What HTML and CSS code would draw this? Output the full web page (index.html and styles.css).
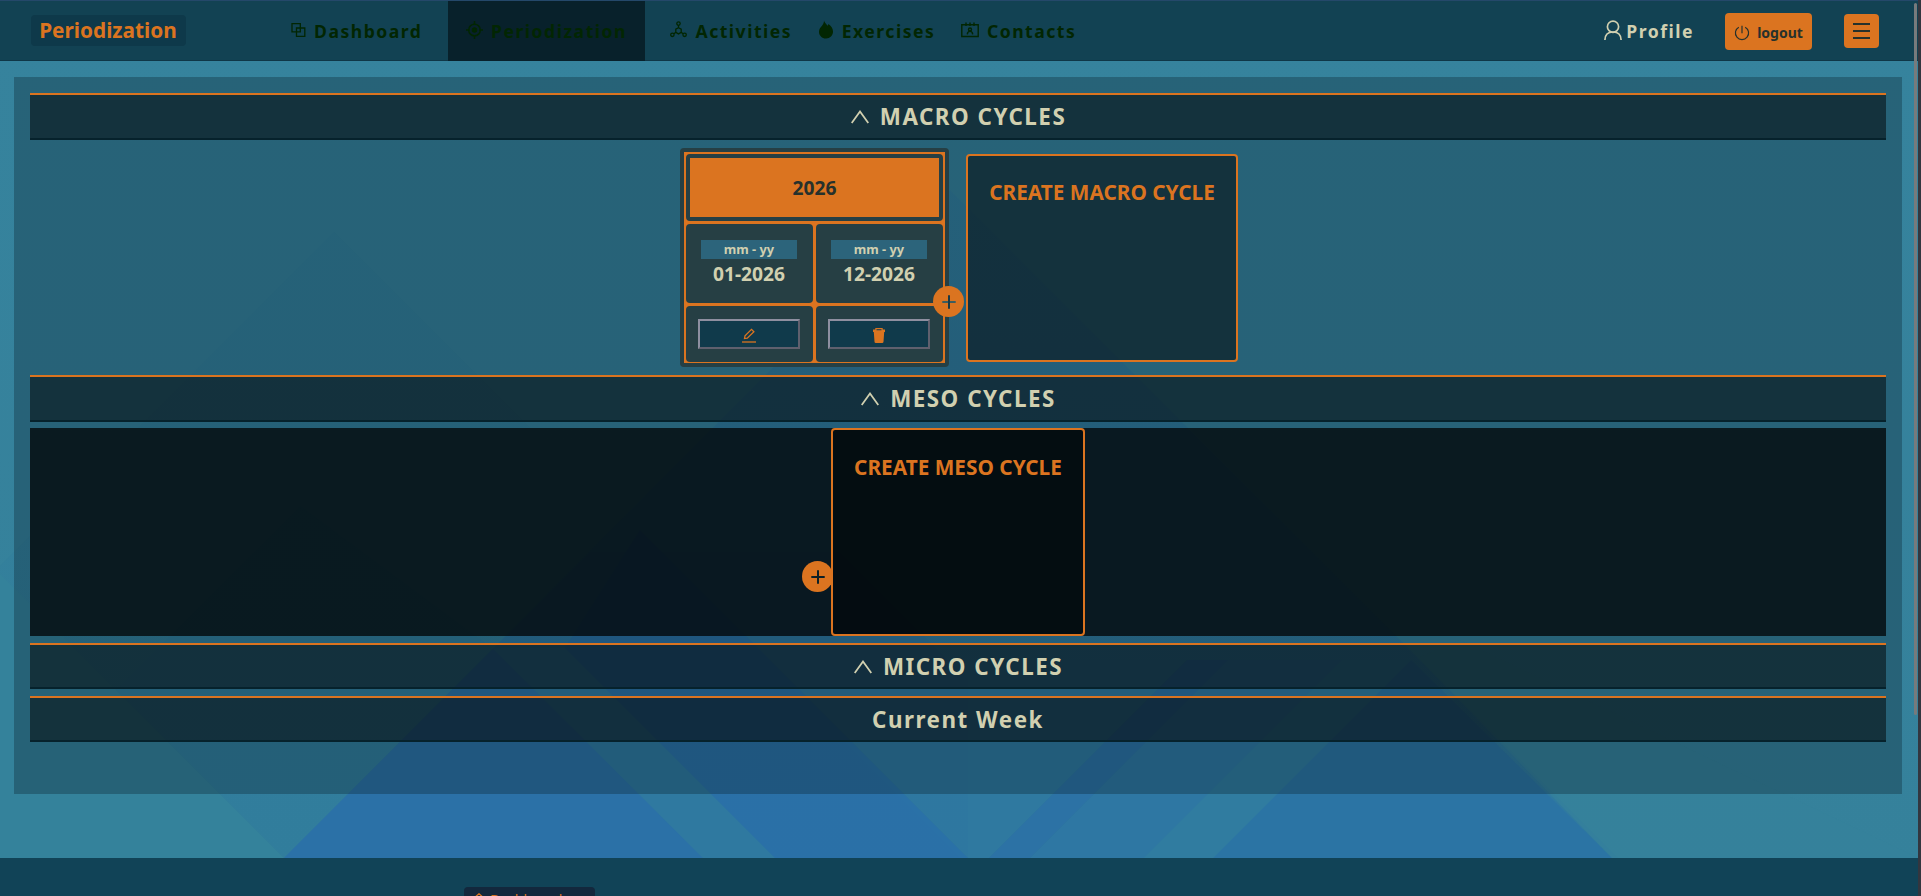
FILE: index.html
```html
<!DOCTYPE html>
<html lang="en">
<head>
<meta charset="utf-8">
<title>Periodization</title>
<link rel="stylesheet" href="styles.css">
</head>
<body>
<div class="page">
  <svg class="backdrop" viewBox="0 0 1918 896" aria-hidden="true">
    <defs>
      <linearGradient id="fade" x1="0" y1="0" x2="0" y2="1">
        <stop offset="0" stop-color="#2b73a5" stop-opacity=".25"/>
        <stop offset=".45" stop-color="#2b73a5" stop-opacity=".5"/>
        <stop offset="1" stop-color="#2b73a5" stop-opacity=".5"/>
      </linearGradient>
      <linearGradient id="sky" x1="0" y1="0" x2="0" y2="1">
        <stop offset="0" stop-color="#36839d"/>
        <stop offset="1" stop-color="#35819b"/>
      </linearGradient>
    </defs>
    <rect width="1918" height="896" fill="url(#sky)"/>
    <path d="M950 190 1618 858V896H284V858Z" fill="url(#fade)"/>
    <path d="M334 232 960 858H284L0 574V566Z" fill="#2b73a5" opacity=".08"/>
    <path d="M0 574 284 858H0Z" fill="#35829b" opacity=".8"/>
    <path d="M284 858 116 690 300 506 493 649Z" fill="#2b73a5" opacity=".15"/>
    <path d="M284 858 493 649 703 858Z" fill="#2a70a8" opacity=".85"/>
    <path d="M493 649 590 552 840 552 968 680 968 858H775L565 648Z" fill="#2a6fa6" opacity=".2"/>
    <path d="M703 858 493 648 565 648 775 858Z" fill="#2f79a0" opacity=".8"/>
    <path d="M775 858 565 648 640 530 968 858Z" fill="#2a6fa9" opacity=".75"/>
    <path d="M968 858 770 660H1187L989 858Z" fill="#2e78a0" opacity=".6"/>
    <path d="M989 858 1187 660H1228L1030 858Z" fill="#2a6ca9" opacity=".6"/>
    <path d="M1213 858 1411 660 1612 858Z" fill="#2b73a5" opacity=".8"/>
    <path d="M1030 858 1228 660H1342L1144 858Z" fill="#2b73a5" opacity=".5"/>
    <path d="M1144 858 1342 660H1411L1213 858Z" fill="#317da0" opacity=".8"/>
    <path d="M1418 658 1460 640 1918 858H1612Z" fill="#35829b" opacity=".75"/>
  </svg>

  <header class="topbar">
    <a class="brand">Periodization</a>
    <nav class="menu">
      <a class="item">
        <svg width="15" height="16" viewBox="0 0 15 16" fill="none" stroke="currentColor" stroke-width="1.3"><path d="M1 1.6h8.3v8.3H1zM5.5 6h8.3v8.3H5.500z"/></svg>
        <span>Dashboard</span></a>
      <a class="item active">
        <svg width="17" height="18" viewBox="0 0 17 18" fill="none" stroke="currentColor" stroke-width="1.5"><circle cx="8.500" cy="9" r="5.800"/><circle cx="8.500" cy="9" r="2" fill="currentColor"/><path d="M8.500 0v4M8.500 14v4M0 9h3.500M13.500 9H17"/></svg>
        <span>Periodization</span></a>
      <a class="item">
        <svg width="17" height="17" viewBox="0 0 17 17" fill="none" stroke="currentColor" stroke-width="1.300"><circle cx="8.500" cy="2.600" r="1.700"/><circle cx="2.400" cy="13.800" r="1.700"/><circle cx="14.600" cy="13.800" r="1.700"/><path d="M8.500 4.300v2.400M8.500 6.700l2.700 1.500v3.200l-2.700 1.500-2.700-1.500V8.200zM5.800 11.400l-2 1.400M11.200 11.400l2 1.400"/></svg>
        <span>Activities</span></a>
      <a class="item">
        <svg width="16" height="19" viewBox="0 0 16 19" fill="currentColor"><path d="M6 .5c.3 2 2 3.200 3.500 5.200.5-.4.800-1 .9-1.700C13 6 15 8.300 15 11.500c0 4-3 7-7 7s-7-3-7-6.800c0-3 1.600-4.200 3-6C5.300 4 6 2.500 6 .5z"/></svg>
        <span>Exercises</span></a>
      <a class="item">
        <svg width="18" height="16" viewBox="0 0 18 16" fill="none" stroke="currentColor" stroke-width="1.400"><path d="M.8 2.700h16.400v11.800H.8zM5 .5v3.600M9 .5v3.600M13 .5v3.600"/><circle cx="9" cy="7.500" r="1.500"/><path d="M6.300 12.400c.2-4 5.200-4 5.400 0"/></svg>
        <span>Contacts</span></a>
    </nav>
    <a class="profile">
      <svg width="18" height="21" viewBox="0 0 18 21" fill="none" stroke="currentColor" stroke-width="1.700"><circle cx="9" cy="6.700" r="5.600"/><path d="M.9 20c.1-5 3-8 8.100-8s8 3 8.100 8"/></svg>
      <span>Profile</span></a>
    <button class="logout">
      <svg width="16" height="16" viewBox="0 0 16 16" fill="none" stroke="currentColor" stroke-width="1.200"><path d="M8 .8v7.400M4.800 2.200a6.600 6.600 0 1 0 6.400 0"/></svg>
      <span>logout</span></button>
    <button class="burger" aria-label="Menu"><i></i><i></i><i></i></button>
  </header>

  <main class="panel">
    <h2 class="bar"><svg class="chev" viewBox="0 0 18 14"><path d="M.7 13 9 1.500 17.300 13"/></svg>MACRO CYCLES</h2>
    <section class="macro">
      <article class="cycle">
        <div class="cell name">2026</div>
        <div class="cell date"><small>mm - yy</small><b>01-2026</b></div>
        <div class="cell date"><small>mm - yy</small><b>12-2026</b></div>
        <div class="cell act"><button class="tool" aria-label="Edit"><svg width="14" height="15" viewBox="0 0 14 15" fill="none" stroke="currentColor" stroke-width="1.300"><path d="M2.500 10.500 3 7.800 9.500 1.300 11.900 3.700 5.300 10.200z"/><path d="M0 14h14"/></svg></button></div>
        <div class="cell act"><button class="tool" aria-label="Delete"><svg width="14" height="15" viewBox="0 0 14 15" fill="currentColor" fill-rule="evenodd"><path d="M3.300 0h7.400v1.500H13V4h-.8l-.7 9.800q-.1 1.200-1.300 1.200H3.800q-1.200 0-1.300-1.200L1.800 4H1V1.500h2.300zM4.500 1.200v1h5v-1z"/></svg></button></div>
        <button class="plus" aria-label="Add"><svg width="14" height="14" viewBox="0 0 14 14"><path d="M.3 7h13.400" stroke="#3c5d5f" stroke-width="2"/><path d="M7 .3v13.400" stroke="#1b3a44" stroke-width="2"/></svg></button>
      </article>
      <div class="create">CREATE MACRO CYCLE</div>
    </section>

    <h2 class="bar"><svg class="chev" viewBox="0 0 18 14"><path d="M.7 13 9 1.500 17.300 13"/></svg>MESO CYCLES</h2>
    <section class="meso">
      <div class="slot">
        <button class="plus before" aria-label="Add"><svg width="14" height="14" viewBox="0 0 14 14"><path d="M7 .3v13.400M.3 7h13.400" stroke="#0b2027" stroke-width="2"/></svg></button>
        <div class="create">CREATE MESO CYCLE</div>
      </div>
    </section>

    <h2 class="bar short"><svg class="chev" viewBox="0 0 18 14"><path d="M.7 13 9 1.500 17.300 13"/></svg>MICRO CYCLES</h2>
    <h2 class="bar short week">Current Week</h2>
  </main>

  <footer class="foot">
    <a class="link"><svg width="12" height="12" viewBox="0 0 12 12" fill="none" stroke="currentColor" stroke-width="1.300"><path d="M.5 5.500 6 .8l5.500 4.700M2 4.500V11h8V4.500"/></svg>Dashboard</a>
  </footer>
  <div class="scroll"></div>
</div>
</body>
</html>
```
FILE: styles.css
```css
* { box-sizing: border-box; }
html, body { height: 100%; overflow: hidden; }
body {
  margin: 0;
  background: #33363f;
  font-family: "Noto Sans", "Open Sans", sans-serif;
  color: #d1d0b0;
}
button { font: inherit; padding: 0; border: 0; }
.page {
  position: relative;
  width: 1918px;
  height: 896px;
  overflow: hidden;
  isolation: isolate;
}
.backdrop { position: absolute; inset: 0; width: 1918px; height: 896px; z-index: -1; }

.topbar {
  display: flex;
  align-items: center;
  height: 61px;
  padding: 0 39px 0 31px;
  background: #124253;
  border-top: 1px solid #24486a;
  border-bottom: 1px solid #0f3747;
}
.brand {
  width: 155px;
  height: 31px;
  padding-right: 1px;
  border-radius: 4px;
  background: #0e394a;
  color: #db7420;
  font-size: 20.8px;
  font-weight: 700;
  line-height: 31px;
  text-align: center;
}
.menu { display: flex; gap: 25.5px; margin-left: 105px; height: 60px; }
.item {
  display: flex;
  align-items: center;
  gap: 8px;
  color: #022602;
  font-size: 17.6px;
  font-weight: 700;
  letter-spacing: 1.5px;
}
.item svg { margin-top: -2px; }
.active { padding: 0 18px 0; background: #08212b; }
.profile {
  display: flex;
  align-items: center;
  gap: 4px;
  margin-left: auto;
  font-size: 17.6px;
  font-weight: 700;
  letter-spacing: 1.5px;
}
.logout {
  display: flex;
  align-items: center;
  justify-content: center;
  gap: 7px;
  width: 87px;
  height: 37px;
  margin: 2px 0 0 31px;
  padding-top: 2px;
  border-radius: 4px;
  background: #db7420;
  color: #26312c;
  font-size: 14px;
  font-weight: 700;
}
.burger {
  display: flex;
  flex-direction: column;
  align-items: center;
  justify-content: center;
  gap: 5px;
  width: 35px;
  height: 34px;
  margin: 1px 0 0 32px;
  border-radius: 4px;
  background: #db7420;
}
.burger i { width: 17px; height: 2px; background: #26312c; }

.panel {
  width: 1888px;
  height: 717px;
  margin: 16px 0 0 14px;
  padding: 16px;
  background: rgba(7, 27, 35, .3);
}
.bar {
  display: flex;
  align-items: center;
  justify-content: center;
  gap: 11px;
  height: 47px;
  margin: 0;
  padding: 0 0 1px 1px;
  border-top: 2px solid #db7420;
  border-bottom: 2px solid #06222c;
  background: rgba(2, 2, 2, .5);
  font-size: 22.4px;
  font-weight: 700;
  letter-spacing: 1.5px;
}
.short { height: 46px; margin-top: 7px; padding-bottom: 0; }
.week { padding-left: 0; }
.chev { width: 18px; height: 14px; margin-top: 2px; fill: none; stroke: #d1d0b0; stroke-width: 1.800; }

.macro {
  display: flex;
  justify-content: center;
  gap: 17px;
  height: 235px;
  padding: 8px 0 8px 2px;
}
.cycle {
  position: relative;
  display: grid;
  grid-template-columns: 127px 127px;
  grid-template-rows: 67px 79px 56px;
  gap: 3px;
  width: 269px;
  height: 219px;
  padding: 2px;
  border: 4px solid #263f44;
  border-radius: 4px;
  background: #db7420;
}
.cell { border-radius: 4px; background: #263f44; }
.name {
  grid-column: span 2;
  display: flex;
  align-items: center;
  justify-content: center;
  border: 4px solid #263f44;
  background: #db7420;
  color: #26312c;
  font-size: 19.2px;
  font-weight: 700;
}
.date {
  display: flex;
  flex-direction: column;
  align-items: center;
  padding: 16px 1px 0 0;
}
.date small {
  width: 96px;
  height: 19px;
  background: #2c647b;
  font-size: 12.8px;
  font-weight: 700;
  line-height: 18px;
  text-align: center;
}
.date b { font-size: 19.2px; font-weight: 700; line-height: 30px; }
.act { display: flex; justify-content: center; padding: 13px 1px 0 0; }
.tool {
  display: flex;
  align-items: center;
  justify-content: center;
  width: 102px;
  height: 30px;
  border: 2px solid;
  border-color: #8e8fa0 #5f606e #5f606e #8e8fa0;
  background: #103a4b;
  color: #db7420;
}
.tool svg { margin-top: 2px; }
.plus {
  position: absolute;
  left: 249px;
  top: 134px;
  display: flex;
  align-items: center;
  justify-content: center;
  width: 31px;
  height: 31px;
  border-radius: 50%;
  background: #db7420;
}
.create {
  width: 272px;
  height: 208px;
  padding-top: 23px;
  border: 2px solid #db7420;
  border-radius: 4px;
  background: rgba(2, 2, 2, .5);
  color: #db7420;
  font-size: 20.8px;
  font-weight: 700;
  line-height: 29px;
  text-align: center;
  white-space: nowrap;
}
.macro .create { margin-top: 6px; padding-top: 22px; }

.meso {
  display: flex;
  justify-content: center;
  height: 208px;
  margin-top: 6px;
  background: rgba(0, 0, 0, .73);
}
.slot { position: relative; }
.slot .create { position: relative; width: 254px; background: rgba(0, 4, 6, .55); }
.plus.before { left: -29px; top: 133px; clip-path: inset(0 2px 0 0); }

.foot {
  display: flex;
  height: 38px;
  margin-top: 64px;
  padding: 29px 0 0 464px;
  background: rgba(16, 65, 84, .96);
}
.link {
  display: flex;
  align-items: center;
  flex: none;
  gap: 5px;
  width: 131px;
  height: 28px;
  padding: 0 9px 4px;
  border-radius: 4px;
  background: #13283d;
  color: #db7420;
  font-size: 14px;
}
.scroll {
  position: absolute;
  left: 1914px;
  top: 3px;
  width: 3px;
  height: 712px;
  border-radius: 2px;
  background: #777a7c;
}
```
